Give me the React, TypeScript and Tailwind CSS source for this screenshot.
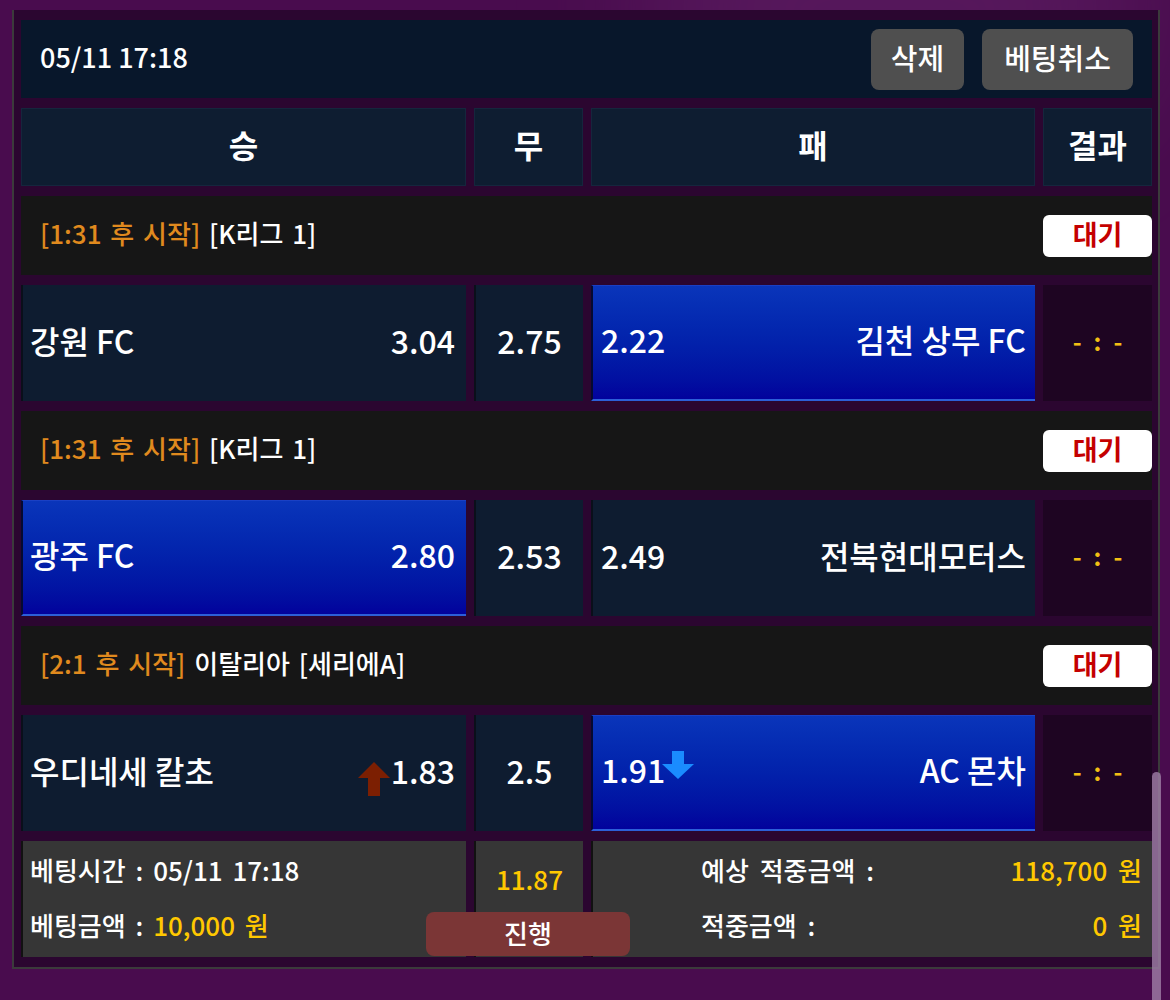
import type { ReactNode } from 'react'

type Pick = 'home' | 'away'

type Match = {
  time: string
  league: string
  home: string
  homeOdds: string
  draw: string
  awayOdds: string
  away: string
  pick: Pick
  homeUp?: boolean
  awayDown?: boolean
}

const MATCHES: Match[] = [
  { time: '[1:31 후 시작]', league: '[K리그 1]', home: '강원 FC', homeOdds: '3.04', draw: '2.75', awayOdds: '2.22', away: '김천 상무 FC', pick: 'away' },
  { time: '[1:31 후 시작]', league: '[K리그 1]', home: '광주 FC', homeOdds: '2.80', draw: '2.53', awayOdds: '2.49', away: '전북현대모터스', pick: 'home' },
  { time: '[2:1 후 시작]', league: '이탈리아 [세리에A]', home: '우디네세 칼초', homeOdds: '1.83', draw: '2.5', awayOdds: '1.91', away: 'AC 몬차', pick: 'away', homeUp: true, awayDown: true },
]

function ArrowUp() {
  return (
    <svg width="34" height="36" viewBox="0 0 34 36" className="mt-[18px]">
      <path d="M17 1 L33 17 L23 17 L23 35 L11 35 L11 17 L1 17 Z" fill="#7c1f02" />
    </svg>
  )
}

function ArrowDown() {
  return (
    <svg width="34" height="30" viewBox="0 0 34 30" className="-mt-[8px] -ml-[4px]">
      <path d="M11 1 L23 1 L23 14 L33 14 L17 29 L1 14 L11 14 Z" fill="#1a8cff" />
    </svg>
  )
}

function Cell({ selected, className, children }: { selected?: boolean; className?: string; children: ReactNode }) {
  return (
    <div
      className={
        (selected
          ? 'bg-gradient-to-b from-[#0a35ba] to-[#02029c] border-t border-t-[#1a40c4] border-b-2 border-b-[#2c5fd8] border-l-2 border-l-[#050a30] '
          : 'bg-[#0e1c30] border-l-2 border-l-[#0a0f1a] ') +
        'h-full flex items-center pb-[7px] ' +
        (className ?? '')
      }
    >
      {children}
    </div>
  )
}

function LeagueRow({ time, league }: { time: string; league: string }) {
  return (
    <div className="h-[79px] bg-[#161616] flex items-center justify-between pl-[19px]">
      <div className="text-[26px] font-medium [word-spacing:3px] pb-[6px]">
        <span className="text-[#e08a1e]">{time}</span> <span className="text-white">{league}</span>
      </div>
      <div className="w-[109px] h-[42px] bg-white rounded-md flex items-center justify-center text-[#c40000] text-[27px] font-bold pb-[3px]">
        대기
      </div>
    </div>
  )
}

function MatchRow({ m }: { m: Match }) {
  return (
    <div className="h-[116px] grid grid-cols-[445px_109px_444px_109px] gap-x-[8px] text-white text-[32px] font-medium">
      <Cell selected={m.pick === 'home'} className="justify-between pl-[7px] pr-[11px]">
        <span>{m.home}</span>
        <span className="flex items-center">
          {m.homeUp && <ArrowUp />}
          {m.homeOdds}
        </span>
      </Cell>
      <Cell className="justify-center">{m.draw}</Cell>
      <Cell selected={m.pick === 'away'} className="justify-between pl-[8px] pr-[9px]">
        <span className="flex items-center">
          {m.awayOdds}
          {m.awayDown && <ArrowDown />}
        </span>
        <span>{m.away}</span>
      </Cell>
      <div className="h-full bg-[#1e0522] flex items-center justify-center gap-[12px] text-[#f2c014] text-[24px] font-bold pb-[4px]">
        <span>-</span>
        <span>:</span>
        <span>-</span>
      </div>
    </div>
  )
}

export default function App() {
  return (
    <div
      className="relative w-[1170px] h-[1000px] overflow-hidden bg-[#490c4e] pt-[10px] pl-[12px]"
      style={{ fontFamily: '"Noto Sans CJK KR", "Noto Sans", sans-serif' }}
    >
      <div className="absolute -top-[120px] left-[640px] w-[500px] h-[260px] rounded-full bg-[#6a2a70] opacity-40 blur-3xl" />
      <div className="relative w-[1148px] bg-[#2b0630] border-x-2 border-b-2 border-[#3b3b3b] pt-[10px] pb-[10px] pl-[7px] pr-[6px] flex flex-col gap-[10px]">
        {/* header */}
        <div className="h-[78px] bg-[#08172b] flex items-center justify-between pl-[19px] pr-[19px]">
          <span className="text-white text-[27px] font-medium pb-[4px]">05/11 17:18</span>
          <div className="flex gap-[18px]">
            <button className="w-[93px] h-[61px] rounded-lg bg-[#4f4f4f] text-white text-[29px] font-medium pb-[3px]">삭제</button>
            <button className="w-[151px] h-[61px] rounded-lg bg-[#4f4f4f] text-white text-[29px] font-medium pb-[3px]">베팅취소</button>
          </div>
        </div>

        {/* column headers */}
        <div className="h-[78px] grid grid-cols-[445px_109px_444px_109px] gap-x-[8px] text-white text-[32px] font-bold">
          <div className="bg-[#0e1d31] border border-[#15263d] flex items-center justify-center pb-[7px]">승</div>
          <div className="bg-[#0e1d31] border border-[#15263d] flex items-center justify-center pb-[7px]">무</div>
          <div className="bg-[#0e1d31] border border-[#15263d] flex items-center justify-center pb-[7px]">패</div>
          <div className="bg-[#0e1d31] border border-[#15263d] flex items-center justify-center pb-[7px]">결과</div>
        </div>

        {MATCHES.map((m, i) => (
          <div key={i} className="flex flex-col gap-[10px]">
            <LeagueRow time={m.time} league={m.league} />
            <MatchRow m={m} />
          </div>
        ))}

        {/* summary */}
        <div className="relative h-[116px] grid grid-cols-[445px_109px_561px] gap-x-[8px] text-white text-[26px] font-medium">
          <div className="bg-[#363636] border-l-2 border-l-[#111] flex flex-col justify-center gap-[16px] pl-[7px] pb-[4px]">
            <span className="[word-spacing:4px]">베팅시간 : 05/11 17:18</span>
            <span className="[word-spacing:4px]">
              베팅금액 : <span className="text-[#ffc800]">10,000 원</span>
            </span>
          </div>
          <div className="bg-[#363636] border-l-2 border-l-[#111] flex justify-center pt-[18px] text-[#ffc800]">11.87</div>
          <div className="bg-[#363636] border-l-2 border-l-[#111] flex flex-col justify-center gap-[16px] pl-[108px] pr-[10px] pb-[4px] [word-spacing:5px]">
            <div className="flex justify-between">
              <span>예상 적중금액 :</span>
              <span className="text-[#ffc800]">118,700 원</span>
            </div>
            <div className="flex justify-between">
              <span>적중금액 :</span>
              <span className="text-[#ffc800]">0 원</span>
            </div>
          </div>
          <div className="absolute left-[405px] top-[71px] w-[204px] h-[44px] rounded-lg bg-[#7b3636] flex items-center justify-center text-[26px] text-white pb-[3px]">
            진행
          </div>
        </div>
      </div>

      {/* scrollbar */}
      <div className="absolute left-[1152px] top-[772px] w-[9px] h-[240px] rounded-full bg-[#a07fa8] opacity-80" />
    </div>
  )
}
